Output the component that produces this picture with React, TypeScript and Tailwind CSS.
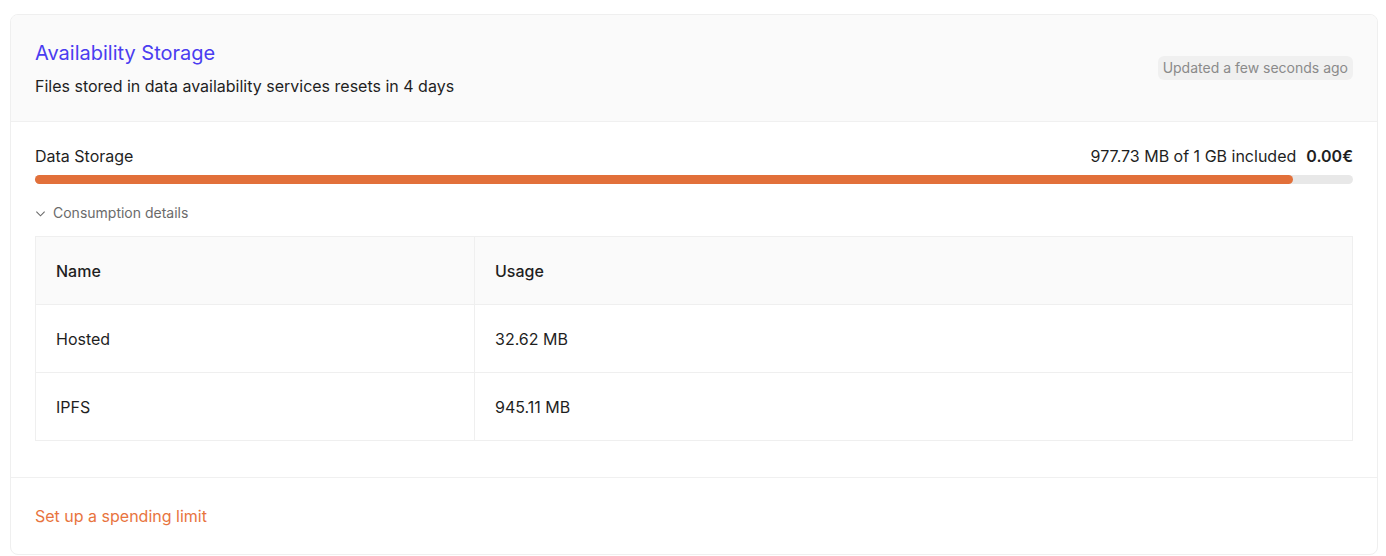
import React from "react";

const rows = [
  { name: "Hosted", usage: "32.62 MB" },
  { name: "IPFS", usage: "945.11 MB" },
];

function ChevronDown() {
  return (
    <svg width="11" height="11" viewBox="0 0 12 12" fill="none" stroke="currentColor" strokeWidth="1.2">
      <path d="M1.5 4l4.5 4.5L10.5 4" />
    </svg>
  );
}

export default function App() {
  const used = 977.73;
  const total = 1024;
  const pct = (used / total) * 100;

  return (
    <div className="min-h-[556px] bg-white pl-[10px] pr-[8px] pt-[14px] font-['Inter',sans-serif] text-[#1f1f1f]">
      <section className="overflow-hidden rounded-lg border border-[#efefef] bg-white">
        <header className="flex items-start justify-between border-b border-[#f0f0f0] bg-[#fafafa] px-[24px] pb-[23px] pt-[24px]">
          <div>
            <h2 className="text-[20px] leading-[28px] text-[#4a3df0]">Availability Storage</h2>
            <p className="mt-[7px] text-[16px] leading-[24px]">
              Files stored in data availability services resets in 4 days
            </p>
          </div>
          <span className="mt-[17px] rounded-md bg-[#f0f0f0] px-[5px] py-[2px] text-[14px] leading-[20px] text-[#8a8a8a]">
            Updated a few seconds ago
          </span>
        </header>

        <div className="border-b border-[#f0f0f0] px-[24px] pb-[36px] pt-[22px]">
          <div className="flex items-center justify-between text-[16px] leading-[24px]">
            <span>Data Storage</span>
            <span>
              977.73 MB of 1 GB included
              <span className="ml-[10px] font-semibold">0.00€</span>
            </span>
          </div>
          <div className="mt-[7px] h-[9px] w-full rounded-full bg-[#e8e8e8]">
            <div className="h-full rounded-full bg-[#e2703a]" style={{ width: `${pct}%` }} />
          </div>

          <button type="button" className="mt-[19px] flex items-center gap-[7px] text-[14px] leading-[20px] text-[#6b6b6b]">
            <ChevronDown />
            Consumption details
          </button>

          <table className="mt-[13px] w-full border-collapse border border-[#efefef] text-left text-[16px]">
            <thead>
              <tr className="h-[68px] bg-[#fafafa]">
                <th className="w-[439px] border-r border-[#efefef] pl-[20px] font-medium">Name</th>
                <th className="pl-[20px] font-medium">Usage</th>
              </tr>
            </thead>
            <tbody>
              {rows.map((row) => (
                <tr key={row.name} className="h-[68px] border-t border-[#efefef]">
                  <td className="border-r border-[#efefef] pl-[20px]">{row.name}</td>
                  <td className="pl-[20px]">{row.usage}</td>
                </tr>
              ))}
            </tbody>
          </table>
        </div>

        <footer className="px-[24px] pb-[26px] pt-[26px]">
          <a href="#" className="text-[16px] leading-[24px] text-[#e8743e]">
            Set up a spending limit
          </a>
        </footer>
      </section>
    </div>
  );
}
